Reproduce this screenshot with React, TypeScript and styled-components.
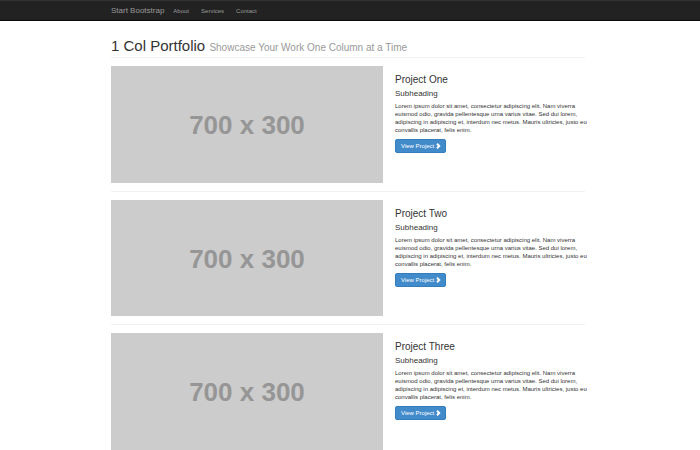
import React from 'react';
import styled, { createGlobalStyle } from 'styled-components';

const GlobalStyle = createGlobalStyle`
  *, *::before, *::after { box-sizing: border-box; }
  body {
    margin: 0;
    background: #fff;
    color: #333;
    font-family: "Liberation Sans", Arial, sans-serif;
    font-size: 6px;
    line-height: 8px;
  }
`;

const NavBar = styled.header`
  background: #222;
  border-top: 1px solid #333;
  border-bottom: 1px solid #080808;
  padding-right: 4px;
`;

const Container = styled.div`
  max-width: 474px;
  margin: 0 auto;
`;

const NavRow = styled(Container)`
  display: flex;
  align-items: center;
  height: 19px;
`;

const Brand = styled.a`
  color: #999;
  font-size: 8px;
  text-decoration: none;
  margin-right: 9px;
`;

const NavList = styled.ul`
  display: flex;
  gap: 12px;
  margin: 0;
  padding: 0;
  list-style: none;
`;

const NavLink = styled.a`
  color: #999;
  text-decoration: none;
`;

const Main = styled.main`
  padding: 16px 4px 0 0;
`;

const PageTitle = styled.h1`
  margin: 0 0 8px;
  padding-bottom: 3px;
  border-bottom: 1px solid #f2f2f2;
  font-size: 15px;
  font-weight: 400;
  line-height: 17px;
`;

const Tagline = styled.small`
  color: #999;
  font-size: 10px;
  line-height: 10px;
`;

const Project = styled.article`
  display: grid;
  grid-template-columns: 272fr 190fr;
  gap: 12px;

  & + & {
    margin-top: 8px;
    padding-top: 8px;
    border-top: 1px solid #f2f2f2;
  }
`;

const Placeholder = styled.a`
  display: flex;
  align-items: center;
  justify-content: center;
  aspect-ratio: 7 / 3;
  padding-top: 2px;
  background: #ccc;
  color: #969696;
  font-size: 26px;
  font-weight: 700;
  line-height: 32px;
  text-decoration: none;
`;

const Details = styled.div`
  padding-top: 8px;
`;

const ProjectName = styled.h3`
  margin: 0 0 4px;
  font-size: 10px;
  font-weight: 400;
  line-height: 11px;
`;

const Subheading = styled.h4`
  margin: 0 0 4px;
  font-size: 8px;
  font-weight: 400;
  line-height: 9px;
`;

const Description = styled.p`
  margin: 0 -8px 5px 0;
`;

const ViewButton = styled.a`
  display: inline-flex;
  align-items: center;
  gap: 2px;
  height: 14px;
  padding: 0 4px 0 5px;
  border: 1px solid #357ebd;
  border-radius: 2px;
  background: #428bca;
  color: #fff;
  text-decoration: none;
`;

const Chevron = () => (
  <svg width="5" height="6" viewBox="0 0 10 12" aria-hidden="true">
    <path d="M3.4 0.2 9.2 6 3.4 11.8 0.6 9 3.6 6 0.6 3Z" fill="#fff" />
  </svg>
);

const links = ['About', 'Services', 'Contact'];
const projects = ['Project One', 'Project Two', 'Project Three'];

export default function App() {
  return (
    <>
      <GlobalStyle />
      <NavBar>
        <NavRow as="nav">
          <Brand href="#">Start Bootstrap</Brand>
          <NavList>
            {links.map((label) => (
              <li key={label}>
                <NavLink href="#">{label}</NavLink>
              </li>
            ))}
          </NavList>
        </NavRow>
      </NavBar>
      <Main>
        <Container>
          <PageTitle>
            1 Col Portfolio <Tagline>Showcase Your Work One Column at a Time</Tagline>
          </PageTitle>
          {projects.map((name) => (
            <Project key={name}>
              <Placeholder href="#">700 x 300</Placeholder>
              <Details>
                <ProjectName>{name}</ProjectName>
                <Subheading>Subheading</Subheading>
                <Description>
                  Lorem ipsum dolor sit amet, consectetur adipiscing elit. Nam viverra euismod odio,
                  gravida pellentesque urna varius vitae. Sed dui lorem, adipiscing in adipiscing et,
                  interdum nec metus. Mauris ultricies, justo eu convallis placerat, felis enim.
                </Description>
                <ViewButton href="#">
                  View Project <Chevron />
                </ViewButton>
              </Details>
            </Project>
          ))}
        </Container>
      </Main>
    </>
  );
}
